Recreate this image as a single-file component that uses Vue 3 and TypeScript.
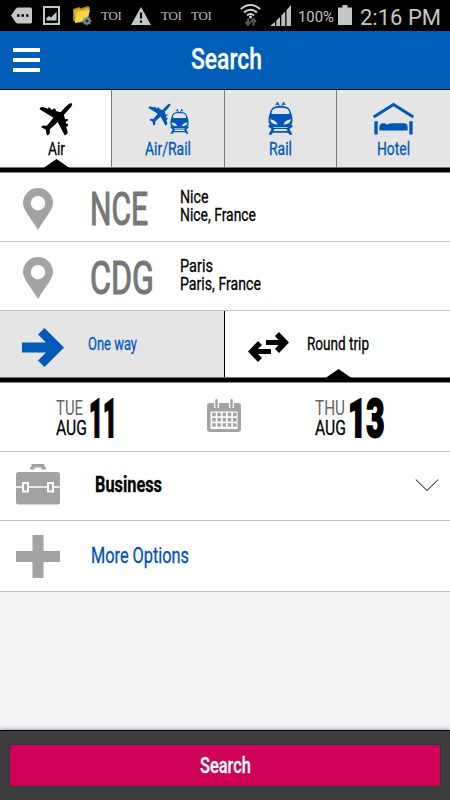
<script setup lang="ts">
import { h, ref, type FunctionalComponent } from 'vue'

interface LabelProps {
  text: string
  width: number
  cap: number
}

// Condensed label: the svg box is exactly the cap height, with the baseline on its lower edge.
const Label: FunctionalComponent<LabelProps> = (props) =>
  h('svg', { class: 'label', width: props.width, height: props.cap }, [
    h(
      'text',
      {
        x: 0,
        y: props.cap,
        'font-size': props.cap / 0.711,
        textLength: props.width,
        lengthAdjust: 'spacingAndGlyphs',
      },
      props.text,
    ),
  ])
Label.props = ['text', 'width', 'cap']

const tabs = [
  { id: 'air', name: 'Air', width: 17 },
  { id: 'airrail', name: 'Air/Rail', width: 46 },
  { id: 'rail', name: 'Rail', width: 23 },
  { id: 'hotel', name: 'Hotel', width: 33 },
]
const activeTab = ref('air')
const roundTrip = ref(true)

const places = [
  { code: 'NCE', codeWidth: 58, city: 'Nice', cityWidth: 28.5, full: 'Nice, France', fullWidth: 76 },
  { code: 'CDG', codeWidth: 64, city: 'Paris', cityWidth: 33, full: 'Paris, France', fullWidth: 81 },
]
</script>

<template>
  <svg class="defs" width="0" height="0">
    <symbol id="plane" viewBox="116 47 104 103">
      <path d="M217 51Q212 49 206 53L195 63L182 78L168 74L166 67L160 66L157 71L152 69L150 64L145 63L143 67L128 62L119 64L118 69L160 95L151 106L140 119L128 118L122 123L137 131L139 145L143 149L149 142L149 130L162 118L173 108L195 149L202 144L204 139L199 123L205 119L205 113L200 114L197 107L204 104L204 98L196 99L192 86L205 72L215 60Q219 54 217 51Z" />
    </symbol>
    <symbol id="train" viewBox="131 50 74 99">
      <path fill-rule="evenodd" d="M168 62C188 62 194 67 198 78C202 88 204 96 204 106C204 116 199 120 191 126H145C137 120 132 116 132 106C132 96 134 88 138 78C142 67 148 62 168 62ZM168 67C151 67 146 69 142 79Q139 86 146 86H190Q197 86 194 79C190 69 185 67 168 67ZM137 102Q136 117 159 118Q157 106 137 102ZM199 102Q200 117 177 118Q179 106 199 102Z" />
      <path fill="none" stroke="currentColor" stroke-width="3" d="M153 57H163Q161 62 167 64M183 57H173Q175 62 169 64" />
      <path d="M156 51H162V57H156ZM174 51H180V57H174ZM132 119H140L148 128H188L196 119H204V124L195 131L204 148H195L191 142H145L141 148H132L141 131L132 124ZM150 131L147 137H189L186 131Z" />
    </symbol>
  </svg>

  <main class="screen">
    <div class="status">
      <svg class="s-tag" width="21" height="17" viewBox="0 0 21 17"><path fill="#c6c6c6" d="M7 .5H19.5Q21 .5 21 2V15Q21 16.500 19.500 16.500H7Q5.500 16.500 4.500 15L0 8.500L4.500 2Q5.500 .5 7 .5Z" /><path stroke="#000" stroke-width="2.500" d="M6 8.500H8.500M10.500 8.500H13M15 8.500H17.500" /></svg>
      <svg class="s-img" width="17" height="19" viewBox="0 0 17 19"><path fill="none" stroke="#c6c6c6" stroke-width="2" d="M1 1H16V18H1Z" /><path fill="#c6c6c6" d="M3.500 14.500V12L6 10L8 11.500L13.500 6V14.500Z" /></svg>
      <svg class="s-folder" width="20" height="20" viewBox="0 0 20 20">
        <path fill="#a57a12" d="M1 3L7 1L9 2L16 0L18 2L16 16L4 17L1 14Z" />
        <path fill="#e3b52a" d="M2 4L7 2L9 4L17 1L15 13L3 16Z" />
        <path fill="#f5d650" d="M5 6L18 4L15 14L3 17Z" />
        <circle cx="15" cy="15" r="2.600" fill="#26323a" stroke="#7b8994" stroke-width="2" />
        <path stroke="#7b8994" stroke-width="1.300" d="M15 10.500V12M15 18V19.500M10.500 15H12M18 15H19.500M11.800 11.800L13 13M17 17L18.200 18.200M18.200 11.800L17 13M13 17L11.800 18.200" />
      </svg>
      <span class="toi">TOI</span>
      <svg class="s-warn" width="20" height="18" viewBox="0 0 20 18"><path fill="#c6c6c6" d="M10 0L20 18H0Z" /><path stroke="#000" stroke-width="2.200" d="M10 5.500V11.500M10 13.500V15.800" /></svg>
      <span class="toi second">TOI</span>
      <span class="toi third">TOI</span>
      <svg class="s-wifi" width="21" height="23" viewBox="0 0 21 23">
        <path fill="none" stroke="#d0d0d0" stroke-width="2" d="M.8 5Q10.500 -3 20.200 5M4 8.500Q10.500 3 17 8.500M7 11.500Q10.500 8.500 14 11.500" />
        <circle cx="10.500" cy="13" r="1.500" fill="#d0d0d0" />
        <path fill="none" stroke="#555" stroke-width="2" d="M8 14.500V21M5.500 18L8 21L10.500 18M13.500 22V15.500M11 18L13.500 15L16 18" />
      </svg>
      <svg class="s-signal" width="20" height="21" viewBox="0 0 20 21"><path fill="#bebebe" d="M0 21V20L4 17V21ZM5.300 21V15.500L9 12V21ZM10.300 21V10.500L14.200 6.500V21ZM15.500 21V5L20 0V21Z" /></svg>
      <Label class="s-pct" text="100%" :width="36" :cap="10.500" />
      <svg class="s-batt" width="14" height="20" viewBox="0 0 14 20"><path fill="#c6c6c6" d="M4.500 0H9.500V2.500H14V20H0V2.500H4.500Z" /></svg>
      <Label class="s-time" text="2:16 PM" :width="81" :cap="16" />
    </div>

    <header class="header">
      <button class="menu" aria-label="Menu"><i /><i /><i /></button>
      <Label class="title" text="Search" :width="71" :cap="21.300" />
    </header>

    <nav class="tabs">
      <button v-for="tab in tabs" :key="tab.id" class="tab" :class="{ active: activeTab === tab.id }" @click="activeTab = tab.id">
        <span class="tab-icon">
          <svg v-if="tab.id === 'air'" width="34" height="34"><use href="#plane" /></svg>
          <svg v-else-if="tab.id === 'airrail'" width="41" height="34"><use href="#plane" y="1" width="23" height="23" /><use href="#train" x="22" y="7" width="19" height="25" /></svg>
          <svg v-else-if="tab.id === 'rail'" width="25" height="33"><use href="#train" /></svg>
          <svg v-else width="41" height="33" viewBox="444 51 122 97">
            <path fill="none" stroke="currentColor" stroke-width="9" d="M446 95L505 58L564 95" />
            <path d="M448 108H458V147H448ZM552 108H562V147H552ZM463 135V123Q465 114 474 114Q482 114 485 118Q492 114 502 114H535Q547 114 547 123V135Z" />
          </svg>
        </span>
        <Label :text="tab.name" :width="tab.width" :cap="12.800" />
        <i v-if="activeTab === tab.id" class="notch" />
      </button>
    </nav>
    <div class="bar" />

    <section v-for="place in places" :key="place.code" class="row place">
      <svg class="pin" width="30" height="42" viewBox="0 0 30 42"><path fill="#a3a3a5" fill-rule="evenodd" d="M15 0A15 15 0 0 1 30 15C30 22 22 30 15 42C8 30 0 22 0 15A15 15 0 0 1 15 0ZM15 8A7.200 7.200 0 1 0 15 22.400A7.200 7.200 0 1 0 15 8Z" /></svg>
      <div class="code"><Label :text="place.code" :width="place.codeWidth" :cap="33" /></div>
      <div class="names">
        <Label :text="place.city" :width="place.cityWidth" :cap="13.300" />
        <Label :text="place.full" :width="place.fullWidth" :cap="13.300" />
      </div>
    </section>

    <section class="trip">
      <button class="way one" :class="{ active: !roundTrip }" @click="roundTrip = false">
        <svg width="42" height="39" viewBox="0 0 42 39"><path d="M0 14.500H24L16 6.500L22.500 0L42 19.500L22.500 39L16 32.500L24 24.500H0Z" /></svg>
        <Label text="One way" :width="49" :cap="12.800" />
        <i v-if="!roundTrip" class="notch" />
      </button>
      <button class="way both" :class="{ active: roundTrip }" @click="roundTrip = true">
        <svg width="41" height="30" viewBox="0 0 41 30"><path d="M18 8H30.500L27 4L31 0L41 10.500L31 21L27 17L30.500 13H18ZM23 17V22H10L14 26L10 30L0 19.500L10 9L14 13L10 17Z" /></svg>
        <Label text="Round trip" :width="62" :cap="12.800" />
        <i v-if="roundTrip" class="notch" />
      </button>
    </section>
    <div class="bar" />

    <section class="row dates">
      <div class="date">
        <div class="stack"><Label class="dow" text="TUE" :width="27" :cap="15" /><Label text="AUG" :width="31" :cap="15" /></div>
        <Label class="day" text="11" :width="28" :cap="38" />
      </div>
      <svg class="calendar" width="34" height="33" viewBox="0 0 34 33">
        <rect y="4" width="34" height="29" rx="3" fill="#a3a3a5" />
        <rect x="3.500" y="12.500" width="27" height="17.500" fill="#fff" />
        <path stroke="#fff" stroke-width="5" d="M9.500 2V9M24.500 2V9" />
        <path stroke="#a3a3a5" stroke-width="2.500" stroke-linecap="round" d="M9.500 1.300V8M24.500 1.300V8" />
        <path fill="none" stroke="#a3a3a5" stroke-width="3.500" stroke-dasharray="3.500 1.700" d="M5.200 15.500H30M5.200 20.800H30M5.200 26.100H30" />
      </svg>
      <div class="date return">
        <div class="stack"><Label class="dow" text="THU" :width="30" :cap="15" /><Label text="AUG" :width="31" :cap="15" /></div>
        <Label class="day" text="13" :width="36.500" :cap="38" />
      </div>
    </section>

    <section class="row cabin">
      <svg width="44" height="41" viewBox="0 0 44 41">
        <path fill="#a3a3a5" d="M14 5.500V3H15.500V0H28.500V3H30V5.500H25.500V3.500H18.500V5.500Z" />
        <rect y="8" width="44" height="32.500" rx="2.500" fill="#a3a3a5" />
        <path stroke="#fff" stroke-width="1.500" d="M0 23H44" />
        <path fill="#a3a3a5" stroke="#fff" stroke-width="2" d="M7 19H12V27.500H7ZM32 19H37V27.500H32Z" />
      </svg>
      <Label text="Business" :width="67" :cap="16.300" />
      <svg class="chevron" width="24" height="13" viewBox="0 0 24 13"><path fill="none" stroke="#000" d="M.8 .5L12 11.500L23.200 .5" /></svg>
    </section>

    <section class="row more">
      <svg width="44" height="43" viewBox="0 0 44 43"><path fill="#a3a3a5" d="M16.500 0H27.500V16H44V27H27.500V43H16.500V27H0V16H16.500Z" /></svg>
      <Label text="More Options" :width="98" :cap="15.500" />
    </section>

    <div class="space" />
    <footer class="footer">
      <button class="submit"><Label text="Search" :width="51" :cap="16" /></button>
    </footer>
  </main>
</template>

<style>
body {
  margin: 0;
}
</style>

<style scoped>
.defs {
  display: block;
}
.screen {
  display: flex;
  flex-direction: column;
  box-sizing: border-box;
  width: 450px;
  height: 800px;
  overflow: hidden;
  background: #f5f5f8;
  font-family: Roboto, "Liberation Sans", sans-serif;
  color: #000;
}
svg {
  display: block;
  flex: none;
  overflow: visible;
  fill: currentColor;
}
button {
  margin: 0;
  padding: 0;
  border: 0;
  font: inherit;
  color: inherit;
  background: none;
}
.label {
  font-weight: 400;
  stroke: currentColor;
  stroke-width: 0.3px;
}
.status {
  display: flex;
  align-items: flex-start;
  height: 31px;
  flex: none;
  background: #000;
  color: #c6c6c6;
}
.status .label {
  stroke: none;
}
.s-tag { margin: 7px 0 0 11px; }
.s-img { margin: 6px 0 0 11px; }
.s-folder { margin: 6px 0 0 12px; }
.toi {
  width: 21px;
  margin: 8px 0 0 9px;
  font: 13px/16px "Liberation Serif", serif;
  letter-spacing: -0.3px;
  color: #bbb;
  white-space: nowrap;
}
.s-warn { margin: 7px 0 0 9px; }
.toi.second { margin-left: 10px; }
.s-wifi { margin: 4px 0 0 28px; }
.s-signal { margin: 5px 0 0 10px; }
.s-pct { margin: 11px 0 0 7px; }
.s-batt { margin: 5px 0 0 4px; }
.s-time { margin: 8.500px 0 0 8px; }

.header {
  display: grid;
  grid-template-columns: 1fr auto 1fr;
  align-items: start;
  flex: none;
  box-sizing: border-box;
  height: 59px;
  border-bottom: 1px solid #000;
  background: #005eb8;
  color: #fff;
}
.menu {
  display: grid;
  gap: 6px;
  width: 27px;
  margin: 17px 0 0 13px;
}
.menu i {
  height: 4px;
  background: #fff;
}
.title {
  margin: 17px 0 0 2px;
  font-weight: 500;
}

.tabs {
  display: grid;
  grid-template-columns: 112px 113px 112px 113px;
  flex: none;
  height: 77px;
}
.tab {
  position: relative;
  display: flex;
  flex-direction: column;
  align-items: center;
  border-right: 1px solid #777;
  background: #e5e5e5;
  color: #0057b8;
}
.tab:first-child { padding-left: 1px; }
.tab:last-child { border-right: 0; }
.tab.active {
  background: #fff;
  color: #000;
}
.tab-icon {
  display: flex;
  height: 40px;
  margin-top: 12px;
}
.notch {
  position: absolute;
  bottom: -1px;
  left: 50%;
  width: 26px;
  height: 9px;
  margin-left: -12px;
  background: #000;
  clip-path: polygon(50% 0, 100% 100%, 0 100%);
}
.bar {
  flex: none;
  height: 4px;
  border-top: 1px solid #777;
  border-bottom: 1px solid #888;
  background: #000;
}
.row {
  display: flex;
  flex: none;
  box-sizing: border-box;
  height: 69px;
  border-bottom: 1px solid #c2c2c2;
  background: #fff;
}
.pin { margin: 15px 0 0 23px; }
.code {
  width: 90px;
  margin: 19px 0 0 37px;
  color: #777;
}
.code .label { stroke-width: 1.200px; }
.names {
  display: grid;
  align-content: start;
  gap: 5.400px;
  margin-top: 16.700px;
}

.trip {
  display: grid;
  grid-template-columns: 224px 226px;
  flex: none;
  height: 66px;
}
.way {
  position: relative;
  display: flex;
  align-items: flex-start;
  background: #e5e5e5;
  color: #005bb8;
}
.way.active {
  background: #fff;
  color: #000;
}
.one svg:first-child { margin: 17px 0 0 22px; }
.one .label { margin: 26px 0 0 23.500px; }
.both { border-left: 1px solid #000; }
.both svg:first-child { margin: 21px 0 0 23px; }
.both .label { margin: 26px 0 0 17.500px; }

.dates { align-items: flex-start; }
.date {
  display: flex;
  width: 151px;
  margin-left: 56px;
}
.stack {
  display: grid;
  align-content: start;
  gap: 5px;
  width: 33px;
  margin-top: 17px;
}
.stack .dow {
  color: #666;
  stroke: none;
}
.date .day {
  margin-top: 15.500px;
  font-weight: 900;
  stroke-width: 2px;
}
.calendar { margin-top: 16px; }
.date.return {
  width: auto;
  margin-left: 74px;
}
.cabin svg:first-child { margin: 12px 0 0 16px; }
.cabin .label {
  margin: 23.500px 0 0 35px;
  font-weight: 700;
}
.cabin .chevron { margin: 27px 11px 0 auto; }
.more { height: 71px; }
.more svg:first-child { margin: 14px 0 0 16px; }
.more .label {
  margin: 25.500px 0 0 30.500px;
  color: #0052b8;
}
.space { flex: 1; }
.footer {
  flex: none;
  box-sizing: border-box;
  height: 70px;
  padding: 14px 10px 13px;
  border-top: 1px solid #000;
  background: #3d3d3d;
  box-shadow: 0 -1px 4px #9fa3b0;
}
.submit {
  display: flex;
  align-items: center;
  justify-content: center;
  width: 430px;
  height: 41px;
  background: #d00057;
  box-shadow: 0 0 0 1px #263b3f;
  color: #fff;
}
.submit .label {
  margin-top: -1px;
  font-weight: 500;
}
</style>
